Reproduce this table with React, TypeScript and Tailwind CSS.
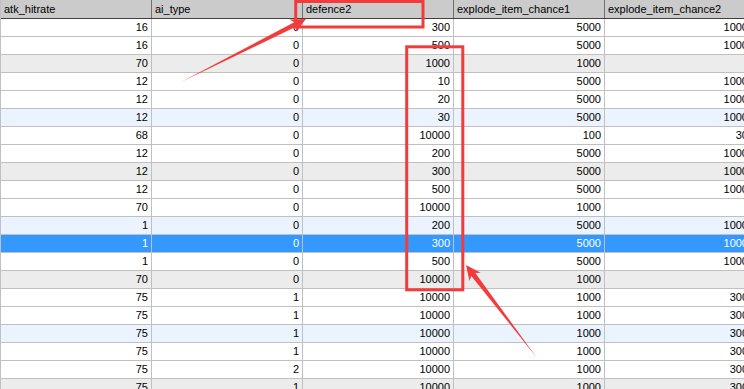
import React from "react";

type Row = { v: string[]; kind: "w" | "b" | "g" | "s" };

const raw: [string, string, string, string, string][] = [
  ["16", "0", "300", "5000", "1000"],
  ["16", "0", "500", "5000", "1000"],
  ["70", "0", "1000", "1000", ""],
  ["12", "0", "10", "5000", "1000"],
  ["12", "0", "20", "5000", "1000"],
  ["12", "0", "30", "5000", "1000"],
  ["68", "0", "10000", "100", "30"],
  ["12", "0", "200", "5000", "1000"],
  ["12", "0", "300", "5000", "1000"],
  ["12", "0", "500", "5000", "1000"],
  ["70", "0", "10000", "1000", ""],
  ["1", "0", "200", "5000", "1000"],
  ["1", "0", "300", "5000", "1000"],
  ["1", "0", "500", "5000", "1000"],
  ["70", "0", "10000", "1000", ""],
  ["75", "1", "10000", "1000", "300"],
  ["75", "1", "10000", "1000", "300"],
  ["75", "1", "10000", "1000", "300"],
  ["75", "1", "10000", "1000", "300"],
  ["75", "2", "10000", "1000", "300"],
  ["75", "1", "10000", "1000", "300"],
];

const rows: Row[] = raw.map((v, i) => {
  const n = i + 1;
  let kind: Row["kind"] = "w";
  if (n === 13) kind = "s";
  else if (n % 6 === 0) kind = "b";
  else if (n % 6 === 3) kind = "g";
  return { v, kind };
});

const headers = ["atk_hitrate", "ai_type", "defence2", "explode_item_chance1", "explode_item_chance2"];

const widths = ["w-[151px]", "w-[151px]", "w-[151px]", "w-[151px]", "w-[147px]"];

export default function App() {
  return (
    <div
      className="relative w-[744px] h-[389px] overflow-hidden bg-white text-[11px] text-black"
      style={{ fontFamily: '"Liberation Sans", Arial, sans-serif' }}
    >
      <div className="flex flex-col border-l border-[#c0c0c0] w-max">
        <div className="flex h-[19px] bg-[#cbcbcb] border-b border-[#404040]">
          {headers.map((h, i) => (
            <div
              key={h}
              className={`${widths[i]} shrink-0 h-full border-r border-[#707070] pl-[3px] leading-[18px] whitespace-nowrap overflow-hidden`}
            >
              {h}
            </div>
          ))}
        </div>
        {rows.map((r, ri) => {
          const bg =
            r.kind === "s"
              ? "bg-[#3399ff] text-white"
              : r.kind === "b"
              ? "bg-[#ebf4fe]"
              : r.kind === "g"
              ? "bg-[#ececec]"
              : "bg-white";
          return (
            <div key={ri} className={`flex h-[18px] border-b border-[#c0c0c0] ${bg}`}>
              {r.v.map((c, ci) => (
                <div
                  key={ci}
                  className={`${widths[ci]} shrink-0 h-full border-r border-[#c0c0c0] pr-[3px] text-right leading-[17px] whitespace-nowrap`}
                >
                  {c}
                </div>
              ))}
            </div>
          );
        })}
      </div>
      <svg className="absolute inset-0 pointer-events-none" width="744" height="389" viewBox="0 0 744 389">
        <rect x="295.7" y="1.5" width="127.3" height="25.5" fill="none" stroke="#f23c3c" strokeWidth="3" />
        <rect x="406.7" y="46.8" width="56.1" height="243" fill="none" stroke="#f23c3c" strokeWidth="3" />
        <polygon
          points="306,19 295.75,32 296.4,26.6 181,82 294.2,22.2 289.45,19.5"
          fill="#f23c3c"
        />
        <polygon
          points="466,265 480.7,272.7 475.3,273 537,358 471.3,276 469.5,281.1"
          fill="#f23c3c"
        />
      </svg>
    </div>
  );
}
